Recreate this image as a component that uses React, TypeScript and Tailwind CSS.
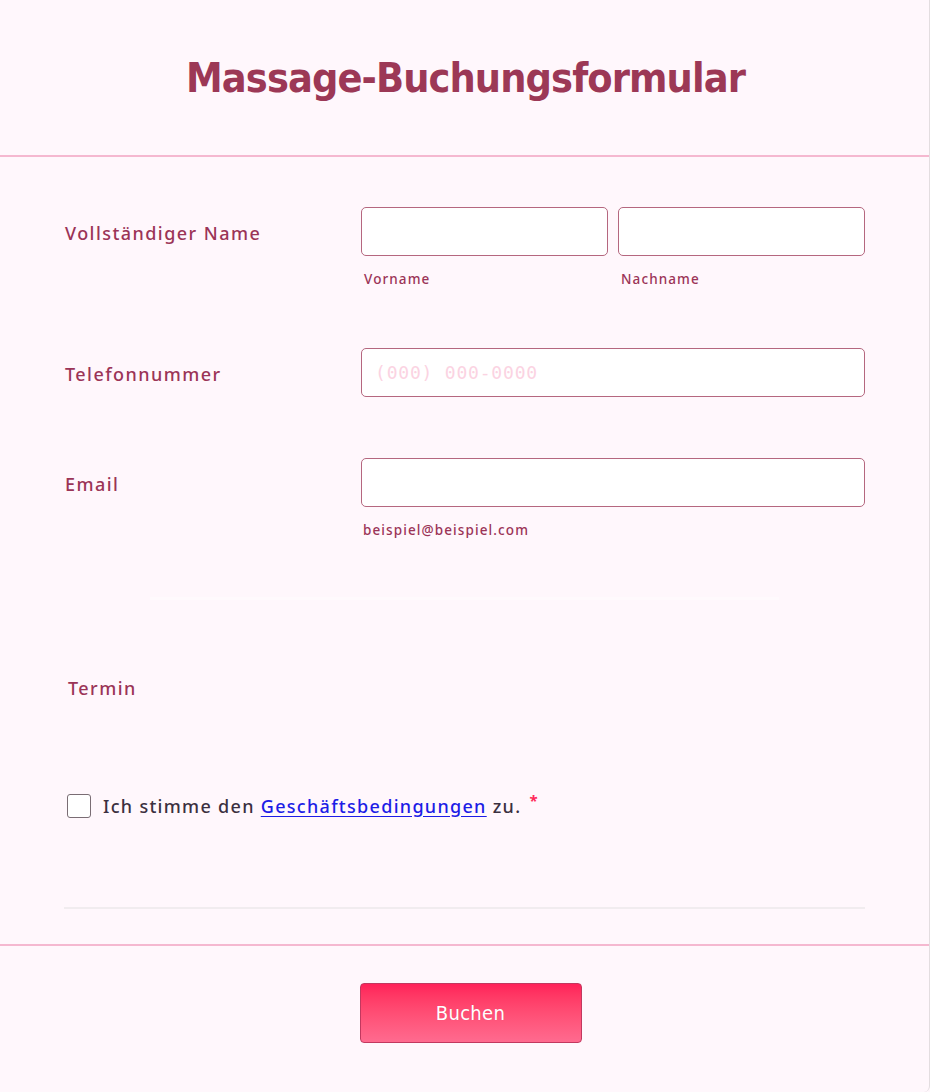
import React from "react";

const labelCls =
  "text-[18px] font-medium tracking-[1.45px] text-[#9b3457] [font-family:'Noto_Sans',sans-serif]";
const subCls =
  "text-[13.5px] font-medium tracking-[1.1px] text-[#9b3457] [font-family:'Noto_Sans',sans-serif]";
const inputCls =
  "h-[49px] rounded-[5px] border border-[#b5677f] bg-white";

export default function App() {
  return (
    <div className="min-h-[1092px] w-[930px] bg-[#fff7fc] [font-family:'Noto_Sans',sans-serif]">
      <div className="w-[930px] border-r border-[#e3dde0] min-h-[1092px] rounded-br-[6px]">
        {/* Header */}
        <div className="h-[157px] border-b-2 border-[#f5b8d0] flex items-center justify-center">
          <h1 className="text-[41px] font-bold text-[#9c3856] tracking-[-0.9px] [font-family:'DejaVu_Sans_Condensed','DejaVu_Sans',sans-serif] pt-[2px] pl-[2px]">
            Massage-Buchungsformular
          </h1>
        </div>

        <div className="px-[64px]">
          {/* Name */}
          <div className="flex pt-[50px]">
            <div className="w-[297px] pt-[13px] pl-[1px]">
              <span className={labelCls}>Vollständiger Name</span>
            </div>
            <div className="flex gap-[10px] w-[504px]">
              <div className="flex-1 flex flex-col">
                <div className={inputCls} />
                <span className={subCls + " mt-[13px] ml-[3px]"}>Vorname</span>
              </div>
              <div className="flex-1 flex flex-col">
                <div className={inputCls} />
                <span className={subCls + " mt-[13px] ml-[3px]"}>Nachname</span>
              </div>
            </div>
          </div>

          {/* Telefon */}
          <div className="flex mt-[59px]">
            <div className="w-[297px] pt-[13px] pl-[1px]">
              <span className={labelCls}>Telefonnummer</span>
            </div>
            <div className={inputCls + " w-[504px] flex items-center px-[13px]"}>
              <span className="text-[18px] text-[#fbd3e2] tracking-[0.8px] [font-family:'DejaVu_Sans_Mono',monospace]">
                (000) 000-0000
              </span>
            </div>
          </div>

          {/* Email */}
          <div className="flex mt-[61px]">
            <div className="w-[297px] pt-[13px] pl-[1px]">
              <span className={labelCls}>Email</span>
            </div>
            <div className="w-[504px] flex flex-col">
              <div className={inputCls} />
              <span className={subCls + " mt-[13px] ml-[2px] tracking-[0.6px]"}>beispiel@beispiel.com</span>
            </div>
          </div>

          {/* faint divider */}
          <div className="mx-[86px] mt-[56px] h-[3px] bg-[#fffafd]" />

          {/* Termin */}
          <div className="mt-[75px] ml-[4px]">
            <span className={labelCls}>Termin</span>
          </div>

          {/* Checkbox */}
          <div className="flex items-center mt-[91px] ml-[3px]">
            <div className="w-[24px] h-[24px] rounded-[3px] border border-[#7a6d74] bg-white" />
            <span className="ml-[12px] text-[18px] font-medium tracking-[1.3px] text-[#3b3040]">
              Ich stimme den{" "}
              <a className="text-[#1c1ce6] underline underline-offset-[3px]" href="#">
                Geschäftsbedingungen
              </a>{" "}
              zu.
            </span>
            <span className="ml-[8px] -mt-[12px] text-[#ff2a5a] text-[15px] font-bold">*</span>
          </div>

          <div className="mt-[87px] h-[2px] bg-[#f1ecef]" />
        </div>

        {/* Footer */}
        <div className="mt-[35px] border-t-2 border-[#f5b8d0] flex justify-center pt-[37px] pb-[47px] pl-[12px]">
          <button className="w-[222px] h-[60px] rounded-[4px] border border-[#c2385f] bg-gradient-to-b from-[#ff2159] to-[#ff6a8f] text-white text-[20px] tracking-[0.3px] [font-family:'DejaVu_Sans_Condensed','DejaVu_Sans',sans-serif] [text-shadow:0_0_1px_rgba(0,0,0,0.1)]">
            Buchen
          </button>
        </div>
      </div>
    </div>
  );
}
